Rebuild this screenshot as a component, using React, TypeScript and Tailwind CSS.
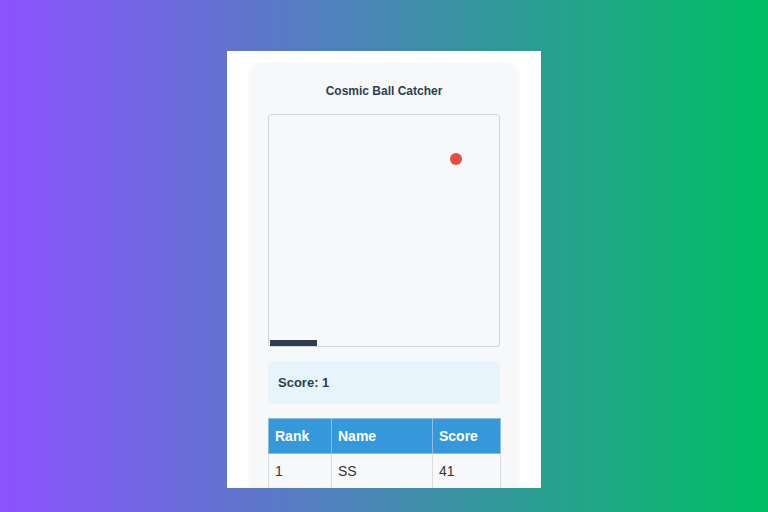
export default function App() {
  return (
    <div
      className="w-[768px] h-[512px] overflow-hidden bg-[linear-gradient(to_right,#8c52ff,#00bf63)] flex flex-col items-center pt-[51px]"
      style={{ fontFamily: '"Liberation Sans", Arial, sans-serif' }}
    >
      <div className="w-[314px] h-[437px] bg-white overflow-hidden px-[23px] pt-[12px]">
        <div className="bg-[#f7f8fa] rounded-[12px] shadow-[0_1px_4px_rgba(0,0,0,0.06)] px-[18px] pt-[20px] pb-[20px]">
          <h1 className="text-center text-[12px] leading-[16px] font-bold text-[#2c3e50] mb-[15px]">
            Cosmic Ball Catcher
          </h1>
          <div className="relative w-[232px] h-[233px] border border-[#d4d6d9] rounded-[3px] bg-[#f7f8fa]">
            <div className="absolute left-[181px] top-[38px] w-[12px] h-[12px] rounded-full bg-[#e74c3c]" />
            <div className="absolute left-[1px] bottom-[0px] w-[47px] h-[6px] bg-[#2c3e50]" />
          </div>
          <div className="mt-[14px] h-[43px] rounded-[4px] bg-[#e8f4fb] flex items-center px-[10px] text-[13px] font-bold text-[#2c3e50]">
            Score: 1
          </div>
          <table className="mt-[14px] w-[232px] border-collapse text-[14px] table-fixed">
            <colgroup>
              <col className="w-[63px]" />
              <col className="w-[101px]" />
              <col className="w-[68px]" />
            </colgroup>
            <thead>
              <tr className="bg-[#3498db] text-white h-[35px]">
                <th className="text-left font-bold px-[6px] border border-[#8fbfe0]">Rank</th>
                <th className="text-left font-bold px-[6px] border border-[#8fbfe0]">Name</th>
                <th className="text-left font-bold px-[6px] border border-[#8fbfe0]">Score</th>
              </tr>
            </thead>
            <tbody>
              <tr className="h-[35px] text-[#333333]">
                <td className="px-[6px] border border-[#dcdcdc]">1</td>
                <td className="px-[6px] border border-[#dcdcdc]">SS</td>
                <td className="px-[6px] border border-[#dcdcdc]">41</td>
              </tr>
            </tbody>
          </table>
        </div>
      </div>
    </div>
  );
}
